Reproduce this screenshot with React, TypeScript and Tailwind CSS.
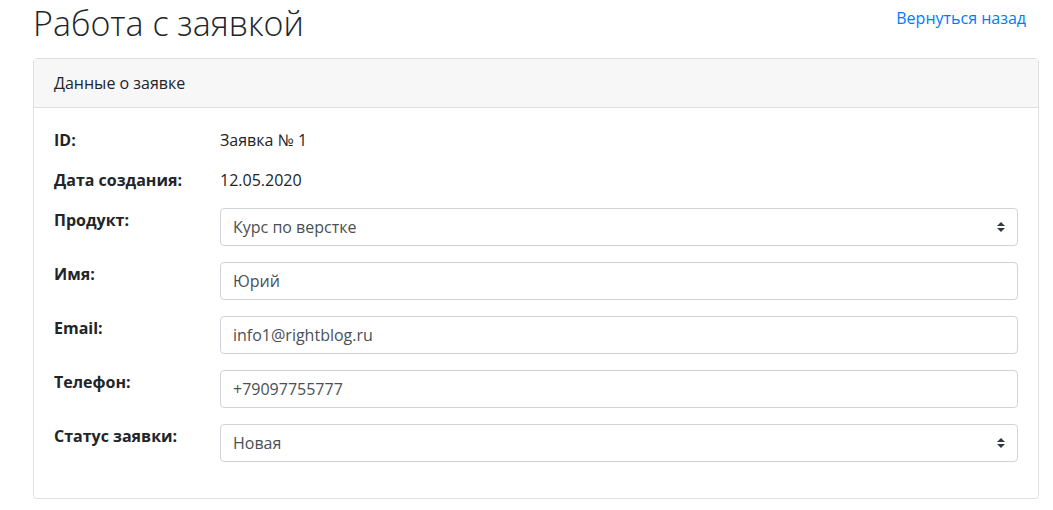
import React from "react";

const font = { fontFamily: '"Open Sans", "Noto Sans", sans-serif' };

function Arrows() {
  return (
    <svg
      width="8"
      height="10"
      viewBox="0 0 4 5"
      className="pointer-events-none absolute right-[12px] top-1/2 -translate-y-1/2"
    >
      <path fill="#343a40" d="M2 0L0 2h4zm0 5L0 3h4z" />
    </svg>
  );
}

function Field({ value, select }: { value: string; select?: boolean }) {
  return (
    <div className="relative flex h-[38px] items-center rounded-[4px] border border-[#ced4da] bg-white px-[12px] text-[16px] leading-[24px] text-[#495057]">
      <span>{value}</span>
      {select && <Arrows />}
    </div>
  );
}

function Row({ label, children }: { label: string; children: React.ReactNode }) {
  return (
    <div className="mb-4 flex">
      <div className="w-[166px] shrink-0 text-[16px] font-bold leading-[24px] text-[#212529]">{label}</div>
      <div className="min-w-0 flex-1">{children}</div>
    </div>
  );
}

export default function App() {
  return (
    <div className="min-h-[510px] bg-white pl-[33px] pr-[14px] text-[#212529]" style={font}>
      <div className="flex items-start justify-between">
        <h1 className="mb-3 whitespace-nowrap text-[34px] font-light leading-[46px] text-[#212529]">
          Работа с заявкой
        </h1>
        <a href="#" className="pr-[13px] pt-[6px] text-[16px] leading-[24px] text-[#007bff]">
          Вернуться назад
        </a>
      </div>
      <div className="rounded-[4px] border border-[#dfdfdf]">
        <div className="border-b border-[#dfdfdf] bg-[#f7f7f7] px-5 py-3 text-[16px] leading-[24px]">
          Данные о заявке
        </div>
        <div className="p-5 text-[16px] leading-[24px]">
          <Row label="ID:">
            <span>Заявка № 1</span>
          </Row>
          <Row label="Дата создания:">
            <span>12.05.2020</span>
          </Row>
          <Row label="Продукт:">
            <Field value="Курс по верстке" select />
          </Row>
          <Row label="Имя:">
            <Field value="Юрий" />
          </Row>
          <Row label="Email:">
            <Field value="info1@rightblog.ru" />
          </Row>
          <Row label="Телефон:">
            <Field value="+79097755777" />
          </Row>
          <Row label="Статус заявки:">
            <Field value="Новая" select />
          </Row>
        </div>
      </div>
    </div>
  );
}
